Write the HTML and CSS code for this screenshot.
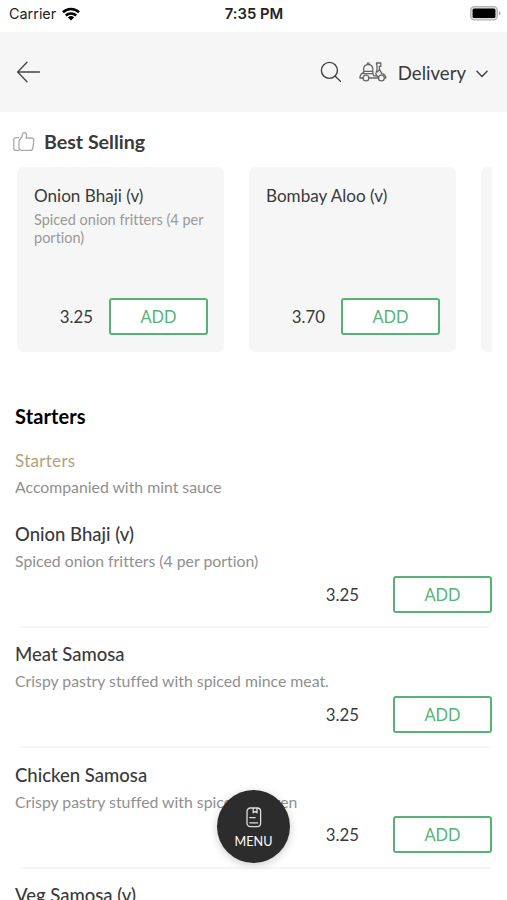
FILE: index.html
```
<!DOCTYPE html>
<html lang="en">
    <head>
        <meta charset="UTF-8">
        <meta name="viewport" content="width=device-width, initial-scale=1">
        <title>Menu</title>
        <link rel="stylesheet" href="styles.css">
    </head>
    <body>
        <div class="screen">
            <div class="status">
                <div class="carrier">
                    <span>Carrier</span>
                    <svg class="wifi" width="18" height="14" viewBox="0 0 18 14" fill="none" stroke="#000" stroke-width="2.6">
                        <path d="M1 5.2a11.6 11.6 0 0 1 16 0M3.8 8.5a7.6 7.6 0 0 1 10.4 0"/>
                        <path d="M9 13.6L5.9 10.5a4.5 4.5 0 0 1 6.2 0z" fill="#000" stroke="none"/>
                    </svg>
                </div>
                <div class="clock">7:35 PM</div>
                <svg class="battery" width="31" height="15" viewBox="0 0 31 15">
                    <rect x=".7" y=".7" width="26.6" height="13.2" rx="3.6" fill="#ddd" stroke="#b5b5b5" stroke-width="1.3"/>
                    <rect x="2.6" y="2.6" width="22.8" height="9.4" rx="1.6"/>
                    <path d="M28.8 5.2q1.8.6 1.8 2.2t-1.8 2.2z" fill="#aaa"/>
                </svg>
            </div>
            <div class="header">
                <svg class="back" width="26" height="22" viewBox="0 0 26 22" fill="none" stroke="#444" stroke-width="1.3" stroke-linecap="round" stroke-linejoin="round">
                    <path d="M23.5 11H1.6M11 1.2L1.6 11l9.4 9.8"/>
                </svg>
                <svg class="search" width="22" height="22" viewBox="0 0 22 22" fill="none" stroke="#444" stroke-width="1.4" stroke-linecap="round">
                    <circle cx="9.4" cy="9.4" r="8"/>
                    <path d="M15.2 15.2l5.2 5"/>
                </svg>
                <svg class="scooter" width="28" height="20" viewBox="0 0 28 20" fill="none" stroke="#666" stroke-width="1.3" stroke-linecap="round" stroke-linejoin="round">
                    <path d="M4.6 9.4V7c0-2.8 1.800-4.400 4.600-4.400S13.800 4.200 13.800 7v2.400zM8.400 2.400V1.200H10v1.200M4.600 9.400v2.200h9.200V9.400"/>
                    <path d="M4.400 10.600C2.400 11.600.9 13.600.9 16h3M13.800 11.600l1 2.200h3.600M10 16h9.400M17.400 1h4.400v3.400h-1.600l.4 3 2.200 4.200c2.400.4 4 2.200 4 4.400h-1.200M18 4.400V8l-1.200 3.600c.2 2 1.200 3 2.800 4.200M20.600 7.400l-2 2.400M17.400 1l.6 3.400"/>
                    <circle cx="7" cy="16" r="2.9"/>
                    <circle cx="22.400" cy="16" r="2.900"/>
                </svg>
                <span class="mode">Delivery</span>
                <svg class="chevron" width="12" height="8" viewBox="0 0 12 8" fill="none" stroke="#444" stroke-width="1.4" stroke-linecap="round" stroke-linejoin="round">
                    <path d="M.9 1.2L6 6.5l5.1-5.3"/>
                </svg>
            </div>
            <div class="best">
                <svg class="thumb" width="22" height="20" viewBox="0 0 22 20" fill="none" stroke="#aaa" stroke-width="1.3" stroke-linejoin="round">
                    <path d="M6 5.6H2.8C1.5 5.6.8 6.3.8 7.6v8.8c0 1.3.7 2 2 2H6"/>
                    <path d="M6 16.2V9.4c0-1.2.5-1.8 1.4-2.7 1.2-1.2 2-2.8 2.2-4.5.1-1 .7-1.500 1.600-1.500 1.600 0 2.400 1.200 2.400 2.800 0 1-.3 1.700-.7 2.500h5.800c1.500 0 2.400 1 2.200 2.400l-1.100 7.700c-.2 1.500-1 2.300-2.500 2.300H8.600C7 18.400 6 17.600 6 16.200z"/>
                </svg>
                <h2>Best Selling</h2>
            </div>
            <div class="cards">
                <div class="card">
                    <h3>Onion Bhaji (v)</h3>
                    <p>Spiced onion fritters (4 per portion)</p>
                    <div class="buy">
                        <span class="price">3.25</span>
                        <button class="add">ADD</button>
                    </div>
                </div>
                <div class="card">
                    <h3>Bombay Aloo (v)</h3>
                    <div class="buy">
                        <span class="price">3.70</span>
                        <button class="add">ADD</button>
                    </div>
                </div>
                <div class="card"></div>
            </div>
            <div class="list">
                <h2>Starters</h2>
                <div class="group">Starters</div>
                <p class="note">Accompanied with mint sauce</p>
                <div class="item">
                    <h3>Onion Bhaji (v)</h3>
                    <p>Spiced onion fritters (4 per portion)</p>
                    <div class="buy">
                        <span class="price">3.25</span>
                        <button class="add">ADD</button>
                    </div>
                </div>
                <div class="item">
                    <h3>Meat Samosa</h3>
                    <p>Crispy pastry stuffed with spiced mince meat.</p>
                    <div class="buy">
                        <span class="price">3.25</span>
                        <button class="add">ADD</button>
                    </div>
                </div>
                <div class="item">
                    <h3>Chicken Samosa</h3>
                    <p>Crispy pastry stuffed with spiced chicken</p>
                    <div class="buy">
                        <span class="price">3.25</span>
                        <button class="add">ADD</button>
                    </div>
                </div>
                <div class="item">
                    <h3>Veg Samosa (v)</h3>
                </div>
            </div>
            <div class="menu">
                <svg width="16" height="21" viewBox="0 0 16 21" fill="none" stroke="#ddd" stroke-width="1.3" stroke-linecap="round" stroke-linejoin="round">
                    <rect x="1" y="1" width="13.6" height="18.6" rx="3.4"/>
                    <path d="M7.2 1.2v4.6l1.9-1.4L11 5.8V1.2M3.8 10.6h5.4M3.8 15.8h7.8"/>
                </svg>
                <span>MENU</span>
            </div>
        </div>
    </body>
</html>
```
FILE: styles.css
```
body {
    margin: 0;
    font-family: Lato, sans-serif;
    font-variant-ligatures: none;
    color: #3a3a3a;
    background: #fff;
}
h2, h3, p {
    margin: 0;
}
svg {
    display: block;
    flex: none;
}
.screen {
    position: relative;
    height: 900px;
    overflow: hidden;
}
.status {
    display: grid;
    grid-template-columns: 1fr auto 1fr;
    align-items: center;
    height: 27px;
    padding: 0 6px 5px 9px;
    font-family: Inter, sans-serif;
    font-size: 14.4px;
    color: #222;
}
.carrier {
    display: flex;
    align-items: center;
    gap: 6px;
}
.clock {
    margin-right: 2px;
    font-size: 14.8px;
    font-weight: 600;
}
.battery {
    justify-self: end;
}
.header {
    display: flex;
    align-items: center;
    height: 80px;
    padding: 0 19px 0 16px;
    background: #f6f6f6;
}
.search {
    margin-left: auto;
}
.scooter {
    margin-left: 17px;
}
.mode {
    margin: 2px 0 0 11px;
    font-size: 18.6px;
}
.chevron {
    margin: 4px 0 0 10px;
}
.best {
    display: flex;
    align-items: center;
    gap: 9px;
    height: 24px;
    margin: 18px 0 13px 13px;
}
.best h2 {
    font-size: 19.6px;
    line-height: 24px;
}
.cards {
    display: flex;
    gap: 25px;
    margin: 0 15px 0 17px;
    overflow: hidden;
}
.card {
    display: flex;
    flex: none;
    flex-direction: column;
    box-sizing: border-box;
    width: 207px;
    height: 185px;
    padding: 17px 16px 17px 17px;
    border-radius: 7px;
    background: #f6f6f6;
}
.card h3 {
    font-size: 17.1px;
    font-weight: 400;
    line-height: 23px;
}
.card p {
    margin-top: 4px;
    font-size: 14.5px;
    line-height: 18px;
    color: #999;
}
.buy {
    display: flex;
    align-items: center;
    justify-content: flex-end;
}
.card .buy {
    gap: 16px;
    margin-top: auto;
}
.price {
    font-size: 16.8px;
}
.add {
    width: 99px;
    height: 37px;
    padding: 0;
    border: 2px solid #55b374;
    border-radius: 3px;
    background: #fff;
    font-family: inherit;
    font-size: 16.4px;
    color: #55b374;
}
.list {
    padding: 0 15px;
}
.list h2 {
    margin-top: 52px;
    font-size: 20px;
    line-height: 24px;
    letter-spacing: .1px;
    color: #000;
}
.group {
    margin-top: 21px;
    font-size: 17px;
    line-height: 24px;
    letter-spacing: .3px;
    color: #b09f7d;
}
.note {
    margin-top: 4px;
    font-size: 15.8px;
    line-height: 20px;
    color: #8f8f8f;
}
.item {
    height: 120.4px;
}
.note + .item {
    margin-top: 25px;
}
.item h3 {
    font-size: 18.5px;
    font-weight: 500;
    line-height: 24px;
}
.item p {
    margin-top: 5px;
    font-size: 15.8px;
    line-height: 20px;
    color: #8f8f8f;
}
.item .buy {
    position: relative;
    gap: 34px;
    margin-top: 4.6px;
}
.item .buy::after {
    content: "";
    position: absolute;
    left: 5px;
    right: 2px;
    bottom: -15.4px;
    height: 2px;
    background: #f6f6f6;
}
.menu {
    position: absolute;
    left: 217px;
    top: 790px;
    display: flex;
    flex-direction: column;
    align-items: center;
    box-sizing: border-box;
    width: 73px;
    height: 73px;
    padding-top: 17px;
    border-radius: 50%;
    background: #2c2c2c;
    box-shadow: 0 2px 8px rgba(0, 0, 0, .2);
    color: #fff;
    font-size: 12.6px;
    line-height: 16px;
}
.menu span {
    margin-top: 6px;
}
```
